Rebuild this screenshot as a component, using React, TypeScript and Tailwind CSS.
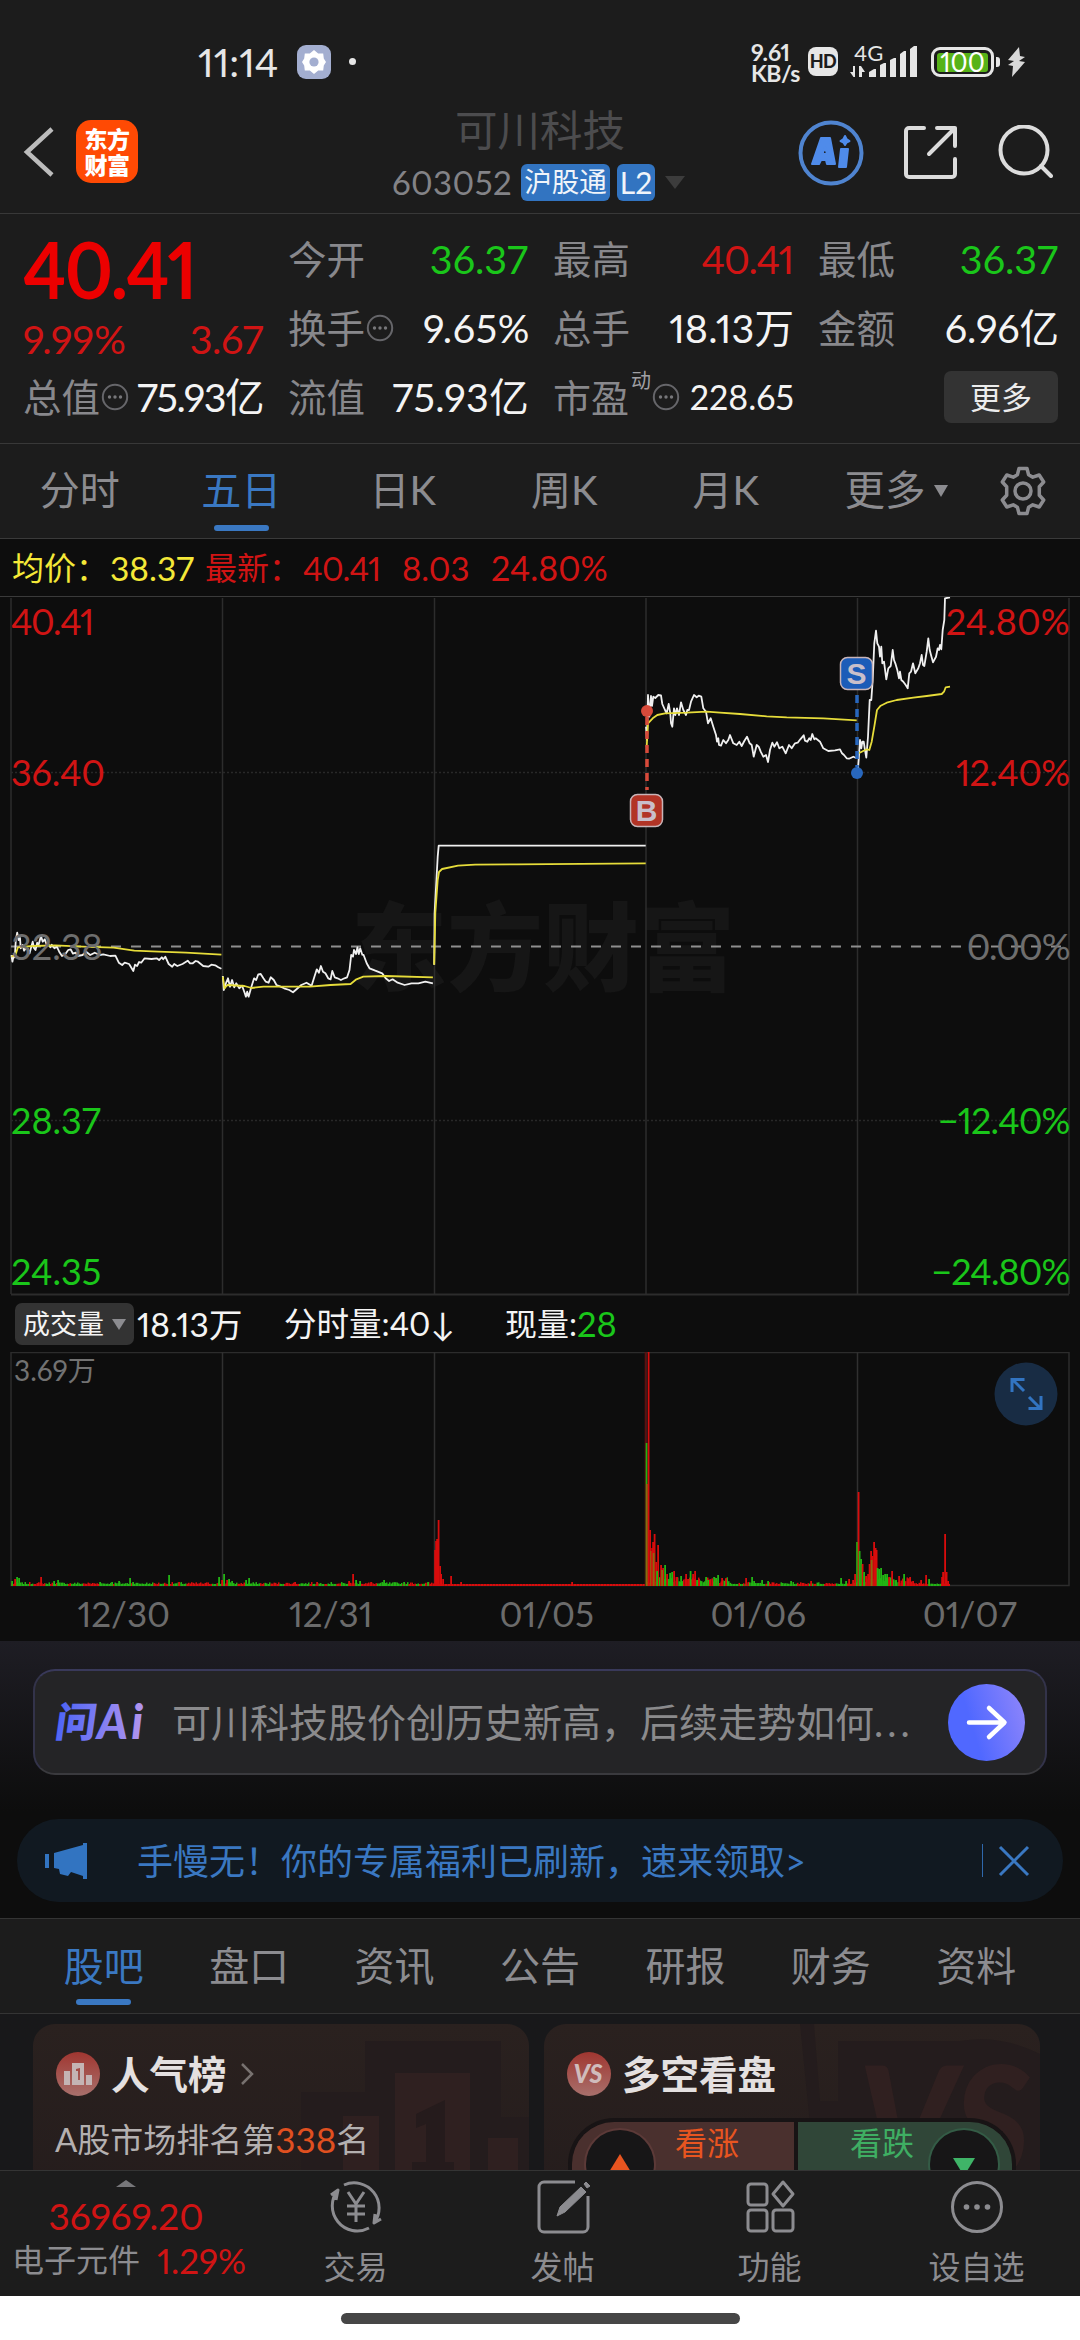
import type { ReactNode } from 'react'
import clsx from 'clsx'

type Tone = 'up' | 'down' | 'plain'

const TONES: Record<Tone, string> = {
  up: 'text-[#d01414]',
  down: 'text-[#1ac61a]',
  plain: 'text-[#f4f4f4]',
}

/* ---------- status bar ---------- */

function StatusBar() {
  return (
    <div className="flex h-[112px] items-start pl-[198px] pt-[42px] text-[#e6e6e6]">
      <span className="w-[99px] text-[39.500px] leading-[40px]">11:14</span>
      <svg className="mt-[3px] h-[34px] w-[34px]" viewBox="0 0 34 34">
        <rect width="34" height="34" rx="9" fill="#a3aed0" />
        <path
          d="M17 5l4.2 3.4h5l.6 5L29 17l-2.2 3.6-.6 5h-5L17 29l-4.200-3.400h-5l-.6-5L5 17l2.200-3.600.6-5h5z"
          fill="#fff"
        />
        <circle cx="17" cy="17" r="4.600" fill="#a3aed0" />
      </svg>
      <span className="ml-[18px] mt-[16px] h-[7px] w-[7px] rounded-full bg-[#e6e6e6]" />

      <div className="ml-[395px] w-[57px] text-[23px] font-bold leading-[20px]">
        <div>9.61</div>
        <div className="mt-px -tracking-[0.5px]">KB/s</div>
      </div>
      <span className="mt-[5px] flex h-[29px] w-[30px] items-center justify-center rounded-[8px] bg-[#e6e6e6] text-[18px] font-black text-[#1c1c1c] -tracking-[0.5px]">
        HD
      </span>
      <div className="ml-[12px] w-[68px]">
        <div className="-mt-px h-[18px] pl-[4px] text-[22px] leading-[24px]">4G</div>
        <svg className="-mt-[13px] block h-[32px] w-[68px]" viewBox="0 0 68 32" fill="#e6e6e6">
          <path d="M5 20v11H3.500L0 26h3V20zM9 31V20h2l4 6h-3v5z" />
          <path d="M19 31v-5l5-3h2v8zM30 31V19l4-2h2v14zM40 31V14l4-2h2v19zM50 31V8l4-3h2v26zM60 31V3l4-3h3v31z" />
        </svg>
      </div>
      <div className="ml-[13px] mt-[5px] flex items-center">
        <span className="flex h-[30px] w-[63px] items-center justify-center rounded-[9px] border-[3px] border-[#e6e6e6] p-[3px]">
          <span className="flex h-[19px] w-full items-center justify-center rounded-[3px] bg-[#57b318] text-[26px] leading-[19px] text-white">
            100
          </span>
        </span>
        <span className="ml-[2px] h-[10px] w-[4px] rounded-r-[3px] bg-[#e6e6e6]" />
        <svg className="ml-[7px] h-[30px] w-[19px]" viewBox="0 0 19 30" fill="#d8d8d8">
          <path d="M12 0L1 13l6 1-6 4 5 1-1 11 13-15-6-1 6-4-5-1z" />
        </svg>
      </div>
    </div>
  )
}

/* ---------- title bar ---------- */

function TitleBar() {
  return (
    <header className="flex h-[102px] border-b border-[#383838] text-[#dcdcdc]">
      <svg className="ml-[23px] mt-[14px] h-[52px] w-[32px]" viewBox="0 0 32 52" fill="none" stroke="#bcbcbc" strokeWidth="4.500">
        <path d="M29 3L4 26l25 23" />
      </svg>
      <div className="ml-[21px] mt-[8px] flex h-[63px] w-[62px] flex-col justify-center rounded-[15px] bg-[#ff4a04] text-center text-[23px] font-black leading-[26px] text-white -tracking-[0.5px]">
        <span>东方</span>
        <span>财富</span>
      </div>
      <div className="flex w-[804px] flex-col items-center">
        <h1 className="-mt-[6px] text-[42.500px] leading-[48px] text-[#4c4c4e]">可川科技</h1>
        <div className="-ml-[3px] mt-[9px] flex items-center">
          <span className="mr-[9px] text-[33px] leading-[38px] text-[#838387] tracking-[0.4px]">603052</span>
          <span className="h-[37px] w-[89px] rounded-[6px] bg-[#3274c1] text-center text-[27.500px] leading-[36px] text-[#f0f4fa]">
            沪股通
          </span>
          <span className="ml-[7px] h-[37px] w-[38px] rounded-[6px] bg-[#3274c1] text-center text-[30px] leading-[36px] text-[#f0f4fa]">
            L2
          </span>
          <span className="ml-[10px] h-0 w-0 border-x-[10px] border-t-[13px] border-x-transparent border-t-[#3c3c3c]" />
        </div>
      </div>
      <div className="-ml-[144px] mt-[8px] flex">
        <svg className="h-[66px] w-[66px]" viewBox="0 0 66 66">
          <circle cx="33" cy="33" r="30.500" fill="none" stroke="#4f84d0" strokeWidth="4" />
          <g fill="#4f8bea" stroke="#4f8bea" strokeWidth="2" strokeLinejoin="round">
            <path fillRule="evenodd" d="M23 18h9l5 26h-8l-1-4h-5l-2 4h-7zM27 27l-2.500 7H29z" />
            <path d="M43 29h7l-2 18h-7z" />
            <path d="M47 16l1.500 3L51.500 21l-3 1.500L47 25l-1.500-2.500L42.500 21l3-2z" />
          </g>
        </svg>
        <svg className="ml-[39px] mt-[5px] h-[56px] w-[56px]" viewBox="0 0 56 56" fill="none" stroke="#dcdcdc" strokeWidth="4" strokeLinecap="round" strokeLinejoin="round">
          <path d="M21 3H6a3 3 0 00-3 3v43a3 3 0 003 3h43a3 3 0 003-3V34" />
          <path d="M34 3h18v18M52 3L26 29" />
        </svg>
        <svg className="ml-[38px] mt-[5px] h-[56px] w-[56px]" viewBox="0 0 56 56" fill="none" stroke="#dcdcdc" strokeWidth="4" strokeLinecap="round">
          <circle cx="27" cy="25" r="23.500" />
          <path d="M44 41l10 10" />
        </svg>
      </div>
    </header>
  )
}

/* ---------- quote ---------- */

function Info() {
  return (
    <svg className="ml-px h-[28px] w-[28px] shrink-0" viewBox="0 0 28 28" fill="#77777a">
      <circle cx="14" cy="14" r="12.200" fill="none" stroke="#66666a" strokeWidth="2" />
      <circle cx="8.500" cy="14" r="1.700" />
      <circle cx="14" cy="14" r="1.700" />
      <circle cx="19.500" cy="14" r="1.700" />
    </svg>
  )
}

interface QuoteCellProps {
  label: string
  value: string
  tone?: Tone
  info?: boolean
  spacing?: string
}

function QuoteCell({ label, value, tone = 'plain', info, spacing }: QuoteCellProps) {
  return (
    <div className="flex h-[69px] w-[240px] items-center whitespace-nowrap">
      <span className="text-[38.500px] leading-[44px] text-[#88888c]">{label}</span>
      {info && <Info />}
      <span className={clsx('ml-auto text-[39.500px] leading-[44px]', TONES[tone], spacing)}>{value}</span>
    </div>
  )
}

function Quote() {
  return (
    <section className="flex h-[230px] border-b border-[#383838] pl-[23px] pt-[10px]">
      <div className="w-[240px]">
        <div className="h-[84px] w-fit origin-left scale-x-[.92] text-[79px] font-bold leading-[90px] text-[#ec0000] -tracking-[2px]">
          40.41
        </div>
        <div className="flex h-[54px] items-center justify-between pt-[7px] text-[39.500px] leading-[44px] text-[#d01414]">
          <span>9.99%</span>
          <span className="-tracking-[0.4px]">3.67</span>
        </div>
        <QuoteCell label="总值" value="75.93亿" info spacing="-tracking-[1.500px]" />
      </div>
      <div className="ml-[25px] w-[240px]">
        <QuoteCell label="今开" value="36.37" tone="down" />
        <QuoteCell label="换手" value="9.65%" info spacing="tracking-[0.6px] -mr-[2px]" />
        <QuoteCell label="流值" value="75.93亿" spacing="tracking-[0.3px] -mr-px" />
      </div>
      <div className="ml-[25px] w-[240px]">
        <QuoteCell label="最高" value="40.41" tone="up" spacing="-tracking-[1.2px]" />
        <QuoteCell label="总手" value="18.13万" spacing="tracking-[0.1px] -mr-px" />
        <div className="flex h-[69px] items-center">
          <span className="text-[38px] leading-[44px] text-[#88888c]">市盈</span>
          <span className="-mt-[34px] ml-[2px] text-[20px] leading-[22px] text-[#a0a0a4]">动</span>
          <Info />
          <span className="-mr-px ml-auto text-[34px] leading-[44px] text-[#f4f4f4]">228.65</span>
        </div>
      </div>
      <div className="ml-[25px] w-[240px]">
        <QuoteCell label="最低" value="36.37" tone="down" />
        <QuoteCell label="金额" value="6.96亿" spacing="-mr-px" />
        <div className="flex h-[69px] items-center justify-end">
          <button className="h-[52px] w-[114px] rounded-[7px] bg-[#333] text-[31px] leading-[48px] text-[#ececec]">更多</button>
        </div>
      </div>
    </section>
  )
}

/* ---------- period tabs ---------- */

const PERIODS = ['分时', '五日', '日K', '周K', '月K']

function PeriodTabs() {
  return (
    <nav className="flex h-[95px] border-b border-[#3a3a3a] text-[40px] leading-[48px] text-[#8c8c90]">
      {PERIODS.map((p) => (
        <div
          key={p}
          className={clsx('-ml-px mr-px flex w-[161.500px] flex-col items-center pt-[22px]', p === '五日' && 'text-[#3a78c2]')}
        >
          <span>{p}</span>
          {p === '五日' && <span className="mt-[11px] h-[6px] w-[55px] rounded-[3px] bg-[#3a78c2]" />}
        </div>
      ))}
      <div className="ml-[37px] flex pt-[22px]">
        <span className="text-[40.500px]">更多</span>
        <span className="ml-[8px] mt-[19px] h-0 w-0 border-x-[7px] border-t-[12px] border-x-transparent border-t-[#8c8c90]" />
      </div>
      <svg className="ml-[50px] mt-[22px] h-[50px] w-[50px]" viewBox="0 0 50 50" fill="none" stroke="#8c8c90" strokeWidth="3.500" strokeLinejoin="round">
        <path d="M21 2.500h8l1.600 6.200 4.200 2.500 6.400-2.200 4.500 7-4.400 4.800v8.400l4.400 4.800-4.500 7-6.400-2.200-4.200 2.500L29 47.500h-8l-1.600-6.200-4.200-2.500L8.800 41l-4.500-7 4.400-4.800v-8.400L4.300 16l4.500-7 6.400 2.200 4.200-2.500z" />
        <circle cx="25" cy="25" r="8" />
      </svg>
    </nav>
  )
}

/* ---------- price chart ---------- */

type Point = [number, number]

// Traces are kept in fractions of a pixel (about a third), relative to the given origin.
const trace = (ox: number, oy: number, unit: number, pts: Point[]) =>
  pts.map(([x, y]) => `${(ox + x / unit).toFixed(1)},${(oy + y / 3).toFixed(1)}`).join(' ')

const PRICE_LINES = [
  trace(0, 840, 2.904, [[33, 345], [36, 365], [40, 345], [43, 352], [46, 300], [50, 278], [54, 300], [58, 294], [60, 325], [66, 315], [70, 332], [76, 322], [80, 325], [86, 340], [91, 320], [95, 305], [99, 325], [103, 330], [108, 308], [112, 314], [119, 288], [124, 305], [130, 298], [136, 316], [140, 312], [146, 322], [150, 314], [158, 325], [165, 320], [172, 335], [180, 348], [190, 342], [198, 330], [205, 328], [212, 341], [220, 338], [225, 348], [240, 345], [250, 335], [262, 345], [275, 338], [290, 345], [300, 343], [320, 348], [335, 347], [345, 368], [355, 375], [362, 368], [375, 372], [387, 393], [392, 374], [398, 378], [404, 366], [410, 368], [420, 355], [440, 357], [455, 355], [462, 360], [470, 352], [474, 358], [480, 350], [490, 372], [500, 380], [506, 372], [515, 378], [530, 372], [545, 362], [552, 370], [560, 370], [568, 363], [575, 365], [590, 378], [605, 380], [614, 374], [625, 376], [634, 382], [643, 386]]),
  trace(0, 840, 2.904, [[647, 408], [650, 450], [656, 430], [662, 415], [668, 440], [674, 420], [680, 442], [686, 430], [695, 445], [703, 437], [711, 460], [714, 470], [718, 455], [722, 470], [730, 440], [738, 415], [744, 420], [750, 403], [757, 402], [765, 415], [772, 425], [780, 428], [786, 412], [795, 420], [803, 435], [815, 440], [825, 445], [840, 450], [851, 457], [862, 447], [875, 435], [890, 428], [905, 437], [913, 410], [920, 388], [926, 398], [932, 378], [938, 395], [945, 400], [953, 415], [960, 418], [965, 393], [972, 412], [980, 415], [990, 420], [1000, 415], [1008, 412], [1015, 390], [1020, 345], [1025, 350], [1028, 330], [1034, 342], [1038, 322], [1042, 342], [1046, 325], [1052, 344], [1056, 345], [1065, 370], [1073, 385], [1090, 392], [1110, 400], [1120, 415], [1130, 423], [1140, 418], [1155, 428], [1175, 435], [1195, 430], [1215, 430], [1235, 425], [1257, 430]]),
  trace(0, 840, 2.904, [[1261, 374], [1262, 220], [1268, 110], [1271, 50], [1274, 17], [1875, 17]]),
  trace(640, 580, 3, [[18, 440], [21, 480], [24, 345], [28, 410], [33, 348], [36, 378], [40, 350], [46, 354], [55, 345], [63, 346], [67, 372], [75, 390], [80, 400], [86, 372], [91, 400], [93, 430], [97, 440], [102, 385], [106, 405], [111, 385], [117, 405], [123, 367], [130, 390], [138, 405], [142, 390], [147, 390], [153, 365], [162, 345], [170, 352], [176, 347], [184, 350], [190, 385], [198, 395], [204, 430], [212, 415], [220, 440], [228, 465], [231, 485], [235, 475], [237, 495], [243, 497], [250, 480], [258, 490], [265, 480], [270, 465], [280, 490], [290, 495], [298, 485], [305, 498], [313, 483], [321, 470], [329, 490], [335, 495], [341, 530], [350, 495], [356, 500], [362, 515], [370, 530], [378, 525], [384, 546], [390, 510], [397, 488], [403, 500], [411, 487], [418, 505], [427, 500], [437, 520], [447, 495], [455, 505], [465, 490], [473, 488], [481, 478], [491, 466], [495, 482], [502, 485], [508, 475], [512, 480], [517, 462], [523, 478], [527, 475], [540, 485], [550, 505], [565, 513], [585, 511], [600, 508], [606, 520], [612, 525], [620, 535], [627, 536], [640, 530], [650, 535]]),
  trace(640, 580, 3, [[653, 575], [656, 540], [660, 480], [664, 505], [667, 485], [671, 485], [674, 505], [679, 533], [684, 470], [689, 360], [694, 360], [698, 300], [703, 190], [708, 152], [712, 190], [717, 200], [720, 230], [724, 200], [727, 250], [732, 245], [736, 275], [739, 298], [745, 265], [752, 258], [758, 210], [762, 240], [766, 250], [772, 270], [777, 295], [780, 275], [784, 300], [790, 305], [797, 315], [803, 325], [808, 280], [813, 275], [819, 250], [826, 280], [835, 265], [840, 250], [845, 225], [849, 255], [853, 258], [860, 215], [865, 175], [869, 210], [873, 225], [879, 247], [888, 230], [893, 205], [897, 210], [900, 195], [904, 208], [908, 150], [913, 120], [915, 55], [930, 52]]),
]

const AVERAGE_LINES = [
  trace(0, 840, 2.904, [[33, 350], [45, 345], [52, 322], [70, 320], [100, 318], [160, 316], [240, 320], [330, 323], [390, 332], [460, 335], [540, 338], [643, 344]]),
  trace(0, 840, 2.904, [[647, 410], [652, 445], [660, 435], [710, 438], [730, 444], [765, 440], [810, 440], [900, 440], [960, 435], [1018, 432], [1035, 418], [1055, 410], [1120, 408], [1257, 412]]),
  trace(0, 840, 2.904, [[1261, 374], [1264, 220], [1271, 120], [1275, 96], [1284, 87], [1330, 77], [1380, 74], [1500, 73], [1875, 70]]),
  trace(640, 580, 3, [[20, 500], [24, 430], [38, 415], [52, 405], [75, 400], [140, 398], [200, 395], [240, 398], [300, 402], [380, 409], [440, 412], [550, 415], [600, 418], [650, 421]]),
  trace(640, 580, 3, [[656, 520], [665, 515], [680, 508], [688, 510], [695, 485], [703, 440], [711, 390], [722, 377], [740, 368], [770, 360], [820, 353], [860, 348], [905, 342], [912, 335], [917, 322], [930, 320]]),
]

const DAY_EDGES = [11, 222.5, 434.5, 646, 857.5, 1069]

interface MarkerProps {
  x: number
  boxY: number
  from: number
  to: number
  dotY: number
  color: string
  fill: string
  letter: string
}

function TradeMarker({ x, boxY, from, to, dotY, color, fill, letter }: MarkerProps) {
  return (
    <g>
      <path d={`M${x} ${from}V${to}`} stroke={color} strokeWidth="3.500" strokeDasharray="8 6" />
      <circle cx={x} cy={dotY} r="6" fill={color} />
      <rect x={x - 16.5} y={boxY} width="32" height="32" rx="7" fill={fill} stroke="#c8b4b8" strokeWidth="1.500" />
      <text x={x - 0.5} y={boxY + 26.5} textAnchor="middle" fontSize="30" fontWeight="700" fill="#c9bfca" className="font-['Liberation_Sans',sans-serif]">
        {letter}
      </text>
    </g>
  )
}

const SCALE = [
  { price: '40.41', percent: '24.80%', y: 622, color: 'fill-[#d01414]', left: -1.4, right: 0 },
  { price: '36.40', percent: '12.40%', y: 773, color: 'fill-[#d01414]', left: -0.2, right: -0.6 },
  { price: '32.38', percent: '0.00%', y: 947, color: 'fill-[#6e6e6e]', left: 0, right: -1 },
  { price: '28.37', percent: '−12.40%', y: 1121, color: 'fill-[#1ac61a]', left: 0, right: -0.9 },
  { price: '24.35', percent: '−24.80%', y: 1272, color: 'fill-[#1ac61a]', left: 0, right: -0.9 },
]

function PriceChart() {
  return (
    <svg className="block h-[699px] w-[1080px]" viewBox="0 597 1080 699" fill="none">
      <text x="351" y="983" fontSize="96" fontWeight="900" fill="#161616">
        东方财富
      </text>
      <g stroke="#2c2c2c" strokeWidth="1.500">
        {DAY_EDGES.map((x) => (
          <path key={x} d={`M${x} 598V1294`} />
        ))}
        <path d="M11 1294.500H1069" strokeWidth="2" />
        <path d="M11 772.500H1069M11 1120.500H1069" stroke="#282828" strokeDasharray="2 2" />
      </g>
      <path d="M11 946.500H1069" stroke="#8e8e8e" strokeWidth="2" strokeDasharray="10 10" />
      <g strokeLinejoin="round">
        {PRICE_LINES.map((points, i) => (
          <polyline key={i} points={points} stroke="#f0f0f0" strokeWidth="1.800" />
        ))}
        {AVERAGE_LINES.map((points, i) => (
          <polyline key={i} points={points} stroke="#e6dc3a" strokeWidth="1.800" />
        ))}
      </g>
      <TradeMarker x={647} boxY={794.5} from={717} to={790} dotY={711} color="#d84a3a" fill="#b23426" letter="B" />
      <TradeMarker x={857} boxY={657.5} from={695} to={767} dotY={773} color="#2867bd" fill="#1c5cb8" letter="S" />
      <g fontSize="36">
        {SCALE.map((row) => (
          <g key={row.price} className={row.color}>
            <text x="11" y={row.y + 13} letterSpacing={row.left}>{row.price}</text>
            <text x="1069.5" y={row.y + 13} textAnchor="end" letterSpacing={row.right}>{row.percent}</text>
          </g>
        ))}
      </g>
    </svg>
  )
}

/* ---------- volume chart ---------- */

const UP = '#d80c0c'
const DOWN = '#22b414'
const MIXED = '#8a6a10'

// x, height, colour: the bars that rise above the base level
const SPIKES: [number, number, string][] = [
  [12, 5, DOWN], [15, 7, UP], [17, 9, DOWN], [19, 8, DOWN], [41, 9, UP], [54, 5, DOWN], [58, 6, DOWN], [100, 4, DOWN],
  [112, 4, DOWN], [119, 5, DOWN], [130, 8, DOWN], [133, 4, DOWN], [169, 11, DOWN], [179, 4, UP], [219, 9, DOWN],
  [222, 6, UP], [224, 12, DOWN], [227, 6, UP], [229, 7, DOWN], [232, 5, DOWN], [246, 6, DOWN], [249, 8, DOWN], [295, 4, UP],
  [317, 4, UP], [349, 5, UP], [353, 12, UP], [356, 6, DOWN], [360, 5, DOWN], [371, 4, UP], [384, 6, DOWN], [404, 4, DOWN], [428, 4, DOWN],
  [435, 36, UP], [436, 45, UP], [437, 47, UP], [438.5, 66, UP], [440, 20, UP], [441, 12, UP], [443, 7, UP], [451, 10, UP], [461, 4, UP], [572, 4, UP],
  [645.5, 234, '#5c1010'], [646.5, 143, DOWN], [646.8, 102, MIXED], [648.5, 234, UP], [650, 56, UP], [651, 35, MIXED], [652, 38, UP], [653, 44, UP],
  [654.5, 52, UP], [653.5, 33, MIXED], [656, 24, UP], [658, 41, UP], [657, 15, DOWN], [661, 21, UP], [663, 18, UP], [665, 21, DOWN], [662, 16, MIXED],
  [667, 12, UP], [670, 13, DOWN], [672, 14, DOWN], [674, 15, UP], [677, 9, UP], [681, 10, DOWN], [686, 12, UP], [688, 7, UP], [690.5, 15, DOWN],
  [693, 12, UP], [695, 15, UP], [697, 6, DOWN], [699, 7, UP], [706, 9, DOWN], [708, 6, DOWN], [714, 9, DOWN], [716, 8, DOWN], [718, 11, DOWN], [722, 8, UP],
  [726, 8, UP], [746, 8, UP], [752, 9, DOWN], [754, 5, DOWN], [762, 6, DOWN], [768, 5, DOWN], [791, 5, DOWN], [811, 5, UP], [841, 8, DOWN], [846, 5, DOWN],
  [849, 7, UP], [853, 6, UP], [855, 12, UP], [857, 44, DOWN], [858.5, 94, UP], [859.5, 35, DOWN], [861, 27, DOWN], [862.5, 22, UP], [864, 14, DOWN],
  [866, 10, UP], [868, 12, UP], [869.5, 22, UP], [871, 35, UP], [872.5, 30, UP], [874, 44, UP], [875.5, 38, UP], [876.5, 36, UP], [871.5, 26, MIXED], [877.5, 18, DOWN],
  [879, 17, DOWN], [881, 18, DOWN], [883, 11, DOWN], [885, 12, DOWN], [887, 12, DOWN], [889, 9, UP], [892, 15, UP], [896, 6, DOWN], [899, 10, UP], [904, 12, DOWN],
  [908, 7, UP], [910, 9, UP], [913, 5, UP], [921, 6, UP], [926, 11, UP], [929, 7, DOWN], [942, 9, UP], [943, 14, UP], [945, 52, UP], [946.5, 14, UP], [948, 5, UP],
]

function baseBars() {
  const bars: ReactNode[] = []
  let seed = 7
  for (let x = 11; x < 950; x += 1.5) {
    seed = (seed * 1103515245 + 12345) % 2147483648
    const r = seed / 2147483648
    const limitUp = x > 434 && x < 645
    const busy = (x > 650 && x < 730) || (x > 860 && x < 912)
    const h = limitUp ? 2 : busy ? 3 + r * 6 : 2 + r * r * 2
    const color = limitUp || (seed >> 8) % 2 ? UP : DOWN
    bars.push(<rect key={x} x={x} y={1586 - h} width="1.5" height={h} fill={color} />)
  }
  return bars
}

function VolumeChart() {
  return (
    <svg className="block h-[236px] w-[1080px]" viewBox="0 1352 1080 236">
      <path d="M11 1352.500H1069V1585.500H11Z" fill="none" stroke="#2c2c2c" strokeWidth="1.500" />
      <g stroke="#303030" strokeWidth="1.500">
        {DAY_EDGES.slice(1, -1).map((x) => (
          <path key={x} d={`M${x} 1352V1585`} />
        ))}
      </g>
      {baseBars()}
      {SPIKES.map(([x, h, color], i) => (
        <rect key={i} x={x - 0.8} y={1586 - h} width="1.8" height={h} fill={color} />
      ))}
      <text x="14" y="1381" fontSize="28" fill="#727272">3.69万</text>
      <circle cx="1026" cy="1394" r="31.500" fill="#182c44" />
      <path
        d="M1024 1391l-12-12M1012 1392v-12.500h12.500M1029 1397l11 11M1041 1396v12.500h-12.500"
        fill="none"
        stroke="#3274c1"
        strokeWidth="3"
      />
    </svg>
  )
}

function VolumeHeader() {
  return (
    <div className="flex h-[56px] items-center pl-[15px] text-[32px] leading-[40px] text-[#f4f4f4]">
      <span className="flex h-[42px] w-[119px] items-center rounded-[7px] bg-[#333] pl-[8px] text-[27px]">
        成交量
        <span className="ml-[8px] h-0 w-0 border-x-[7px] border-t-[11px] border-x-transparent border-t-[#8c8c90]" />
      </span>
      <span className="ml-[3px] w-[147px] text-[33.500px]">18.13万</span>
      <span className="w-[221px] text-[32.500px]">分时量:40↓</span>
      <span>现量:</span>
      <span className="text-[34.500px] text-[#1ac61a]">28</span>
    </div>
  )
}

/* ---------- promos ---------- */

function AskAi() {
  return (
    <div className="h-[170px] bg-linear-to-b from-[#1e1d24] to-[#0d0d0d] px-[33px] pt-[28px]">
      <div className="flex h-[106px] items-center rounded-[22px] border-2 border-x-[#33334a] border-t-[#39395a] border-b-[#3a3a3e] bg-[#242426] px-[20px]">
        <svg className="h-[52px] w-[92px] overflow-visible" viewBox="0 -4 92 52">
          <defs>
            <linearGradient id="ask" x1="-50" x2="90" gradientUnits="userSpaceOnUse">
              <stop offset=".35" stopColor="#4c64f6" />
              <stop offset="1" stopColor="#b496ee" />
            </linearGradient>
          </defs>
          <text x="0" y="37" fontSize="41" fontWeight="900" fill="url(#ask)" transform="skewX(-8) translate(4 0)">
            问
          </text>
          <text x="42" y="39" fontSize="47" fontWeight="900" fontStyle="italic" fill="url(#ask)" textLength="46">
            Ai
          </text>
        </svg>
        <p className="ml-[25px] whitespace-nowrap text-[39px] leading-[48px] text-[#8a8a8c]">
          可川科技股价创历史新高，后续走势如何<span className="tracking-[4px]">...</span>
        </p>
        <svg className="ml-auto h-[77px] w-[77px] shrink-0" viewBox="0 0 77 77">
          <defs>
            <linearGradient id="go" x1="0" x2="1" y1=".6" y2=".3">
              <stop offset=".3" stopColor="#5068ff" />
              <stop offset="1" stopColor="#8b84fb" />
            </linearGradient>
          </defs>
          <circle cx="38.500" cy="38.500" r="38.500" fill="url(#go)" />
          <path d="M21 38.500h35M41 24l15.500 14.500L41 53" fill="none" stroke="#fff" strokeWidth="4.500" strokeLinecap="round" strokeLinejoin="round" />
        </svg>
      </div>
    </div>
  )
}

function NoticeBanner() {
  return (
    <div className="mx-[17px] mt-[8px] flex h-[83px] items-center rounded-full bg-[#111921] pl-[28px] text-[#3a78c2]">
      <svg className="h-[36px] w-[42px]" viewBox="0 0 42 36" fill="#3274c1">
        <path d="M0 11h4v14H0zM9 10L38 2V0h4v36h-4v-3l-12-4-3 4-8-2-1-5-5-1z" />
      </svg>
      <span className="ml-[50px] text-[36px] leading-[44px]">手慢无！你的专属福利已刷新，速来领取&gt;</span>
      <span className="ml-auto h-[33px] w-px bg-[#2f68ac]" />
      <svg className="ml-[15px] mr-[33px] h-[32px] w-[32px]" viewBox="0 0 32 32" stroke="#3a78c2" strokeWidth="3">
        <path d="M2 2l28 28M30 2L2 30" />
      </svg>
    </div>
  )
}

/* ---------- lower section ---------- */

const SECTIONS = ['股吧', '盘口', '资讯', '公告', '研报', '财务', '资料']

function SectionTabs() {
  return (
    <nav className="mt-[16px] flex h-[96px] border-y border-[#343434] bg-[#1c1c1c] px-[31px] text-[40px] leading-[48px] text-[#8c8c90]">
      {SECTIONS.map((s, i) => (
        <div key={s} className={clsx('flex flex-1 flex-col items-center pt-[23px]', i === 0 && 'text-[#3a78c2]')}>
          <span>{s}</span>
          {i === 0 && <span className="mt-[9px] h-[6px] w-[55px] rounded-[3px] bg-[#3a78c2]" />}
        </div>
      ))}
    </nav>
  )
}

function Badge({ children }: { children: ReactNode }) {
  return (
    <svg className="h-[46px] w-[46px]" viewBox="0 0 46 46">
      <defs>
        <linearGradient id="badge" x1="0" x2="0" y1="0" y2="1">
          <stop offset="0" stopColor="#a03630" />
          <stop offset="1" stopColor="#a8706c" />
        </linearGradient>
      </defs>
      <circle cx="23" cy="23" r="22" fill="url(#badge)" />
      {children}
    </svg>
  )
}

function PopularityCard() {
  return (
    <div className="relative h-[200px] w-[496px] overflow-hidden rounded-[22px] bg-linear-to-b from-[#2a211f] to-[#241c1c]">
      <svg className="absolute right-0 top-0 h-[200px] w-[260px]" viewBox="0 0 260 200">
        <path d="M32 200V68h64V17h136v76h28v107z" fill="#241c1d" />
        <path d="M74 200V92h36v108zM126 200V49h75v151zM219 200v-86h30v86z" fill="#2f2020" />
        <path d="M147 90l29-14v62h9v16h-42v-16h14v-38l-10 4z" fill="#251b1c" />
      </svg>
      <div className="relative pl-[22px] pt-[27px]">
        <div className="flex items-center">
          <Badge>
            <path fillRule="evenodd" d="M9 20h6v14H9zM17 12h12v22H17zM31 24h6v10h-6zM21 18v2h2v9h2V17z" fill="#c4b4b4" />
          </Badge>
          <h2 className="ml-[10px] text-[38.500px] font-bold leading-[46px] text-[#e4e0e0]">人气榜</h2>
          <svg className="ml-[13px] h-[22px] w-[14px]" viewBox="0 0 14 22" fill="none" stroke="#77716f" strokeWidth="2.500">
            <path d="M2 1l10 10L2 21" />
          </svg>
        </div>
        <p className="mt-[22px] flex text-[33px] leading-[40px] text-[#b4b0b0]">
          <span>A股市场排名第</span>
          <span className="text-[35px] text-[#e05020]">338</span>
          <span>名</span>
        </p>
      </div>
    </div>
  )
}

function SentimentCard() {
  return (
    <div className="relative h-[200px] w-[496px] overflow-hidden rounded-[22px] bg-linear-to-b from-[#2a211f] to-[#241c1c]">
      <svg className="absolute right-0 top-0 h-[200px] w-[240px]" viewBox="0 0 240 200">
        <path d="M0 0l10 100L18 200H240V30Q200 10 160 17H38v60H20L14 0z" fill="#241c1d" />
        <text x="58" y="158" fontSize="160" fontWeight="900" fontStyle="italic" fill="#302020" textLength="172" lengthAdjust="spacingAndGlyphs">
          VS
        </text>
      </svg>
      <div className="relative pl-[22px] pt-[27px]">
        <div className="flex items-center">
          <Badge>
            <text x="22" y="32" textAnchor="middle" fontSize="26" fontWeight="900" fontStyle="italic" fill="#d0bcbc" textLength="29" lengthAdjust="spacingAndGlyphs">
              VS
            </text>
          </Badge>
          <h2 className="ml-[10px] text-[38.500px] font-bold leading-[46px] text-[#e4e0e0]">多空看盘</h2>
        </div>
      </div>
      <div className="relative ml-[24px] mt-[21px] flex h-[94px] w-[448px] overflow-hidden rounded-t-[46px] border-4 border-b-0 border-[#181415] bg-[#181415] text-[32px] leading-[40px]">
        <div className="flex w-[222px] bg-[#4a302e] pl-[14px]">
          <span className="mt-[8px] flex h-[68px] w-[68px] justify-center rounded-full bg-[#171617] ring-2 ring-[#5c3a38]">
            <span className="mt-[24px] h-0 w-0 border-x-[11px] border-b-[18px] border-x-transparent border-b-[#e85520]" />
          </span>
          <span className="ml-[21px] mt-px text-[#e85520]">看涨</span>
        </div>
        <div className="ml-[4px] flex flex-1 justify-end bg-[#304638] pr-[14px]">
          <span className="mr-[16px] mt-px text-[#3fae63]">看跌</span>
          <span className="mt-[8px] flex h-[68px] w-[68px] justify-center rounded-full bg-[#171617] ring-2 ring-[#345c46]">
            <span className="mt-[28px] h-0 w-0 border-x-[11px] border-t-[18px] border-x-transparent border-t-[#3fb468]" />
          </span>
        </div>
      </div>
    </div>
  )
}

/* ---------- bottom bar ---------- */

function NavItem({ label, children }: { label: string; children: ReactNode }) {
  return (
    <div className="flex w-[207px] flex-col items-center pt-[7px]">
      <svg className="h-[58px] w-[64px]" viewBox="0 0 64 58" fill="none" stroke="#8c8c90" strokeWidth="3" strokeLinejoin="round">
        {children}
      </svg>
      <span className="mt-[11px] text-[32px] leading-[40px] text-[#8c8c90]">{label}</span>
    </div>
  )
}

function BottomBar() {
  return (
    <footer className="flex h-[126px] border-t border-[#343434] bg-[#1c1c1c]">
      <div className="w-[252px] text-[#d01414]">
        <div className="ml-[116px] mt-[9px] h-0 w-0 border-x-[10px] border-b-[7px] border-x-transparent border-b-[#77777a]" />
        <div className="mt-[7px] h-[44px] w-[252px] text-center text-[37px] leading-[44px]">36969.20</div>
        <div className="flex pl-[12px] text-[32px] leading-[44px]">
          <span className="text-[#8c8c90]">电子元件</span>
          <span className="ml-[17px] text-[35px]">1.29%</span>
        </div>
      </div>
      <NavItem label="交易">
        <path d="M20 7A25 25 0 0150 45M45 50A25 25 0 0114 12M7 17l7-5-2 10M57 41l-7 4 1-9" />
        <path d="M24 14l8 12 8-12M32 26v18M23 28h18M23 36h18" />
      </NavItem>
      <NavItem label="发帖">
        <path d="M44 4H13a5 5 0 00-5 5v40a5 5 0 005 5h39a5 5 0 005-5V18" />
        <path d="M26 38l3-9L50 9l5 5-21 20zM53 6l2-2 4 4-3 2z" fill="#8c8c90" strokeWidth="1" />
      </NavItem>
      <NavItem label="功能">
        <rect x="10" y="6" width="19" height="21" rx="3" />
        <rect x="10" y="32" width="19" height="21" rx="3" />
        <rect x="35" y="32" width="20" height="21" rx="3" />
        <path d="M45 4l10 12-10 12-10-12z" />
      </NavItem>
      <NavItem label="设自选">
        <circle cx="32" cy="29" r="24.500" />
        <g fill="#8c8c90" stroke="none">
          <circle cx="21.500" cy="29" r="2.800" />
          <circle cx="32" cy="29" r="2.800" />
          <circle cx="42.500" cy="29" r="2.800" />
        </g>
      </NavItem>
    </footer>
  )
}

const DATES = ['12/30', '12/31', '01/05', '01/06', '01/07']

export default function App() {
  return (
    <div className="h-[2340px] w-[1080px] overflow-hidden bg-[#0d0d0d] font-['Lato','Noto_Sans_CJK_SC',sans-serif] proportional-nums">
      <div className="bg-[#1c1c1c]">
        <StatusBar />
        <TitleBar />
        <Quote />
        <PeriodTabs />
      </div>

      <div className="flex h-[58px] items-center whitespace-pre border-b border-[#3a3a3a] pl-[12px] text-[33px] leading-[40px] text-[#d01414]">
        <span className="w-[98px] text-[32px] text-[#f4e838]">均价：</span>
        <span className="w-[95px] text-[33.500px] text-[#f4e838]">38.37</span>
        <span className="w-[98px] text-[32px]">最新：</span>
        <span className="w-[99px] -tracking-[0.8px]">40.41</span>
        <span className="w-[89px]">8.03</span>
        <span className="text-[34px]">24.80%</span>
      </div>
      <PriceChart />
      <VolumeHeader />
      <VolumeChart />
      <div className="flex h-[53px] pl-[18px] text-[35px] leading-[50px] text-[#6b6b6b]">
        {DATES.map((d) => (
          <span key={d} className={clsx('w-[211.500px] text-center', d === '12/31' && 'pr-[9px]')}>{d}</span>
        ))}
      </div>

      <AskAi />
      <NoticeBanner />
      <SectionTabs />
      <div className="flex h-[156px] gap-[15px] overflow-hidden bg-[#18181a] pl-[33px] pt-[10px]">
        <PopularityCard />
        <SentimentCard />
      </div>
      <BottomBar />
      <div className="flex h-[44px] justify-center bg-white pt-[17px]">
        <span className="h-[11px] w-[399px] rounded-full bg-[#464646]" />
      </div>
    </div>
  )
}
